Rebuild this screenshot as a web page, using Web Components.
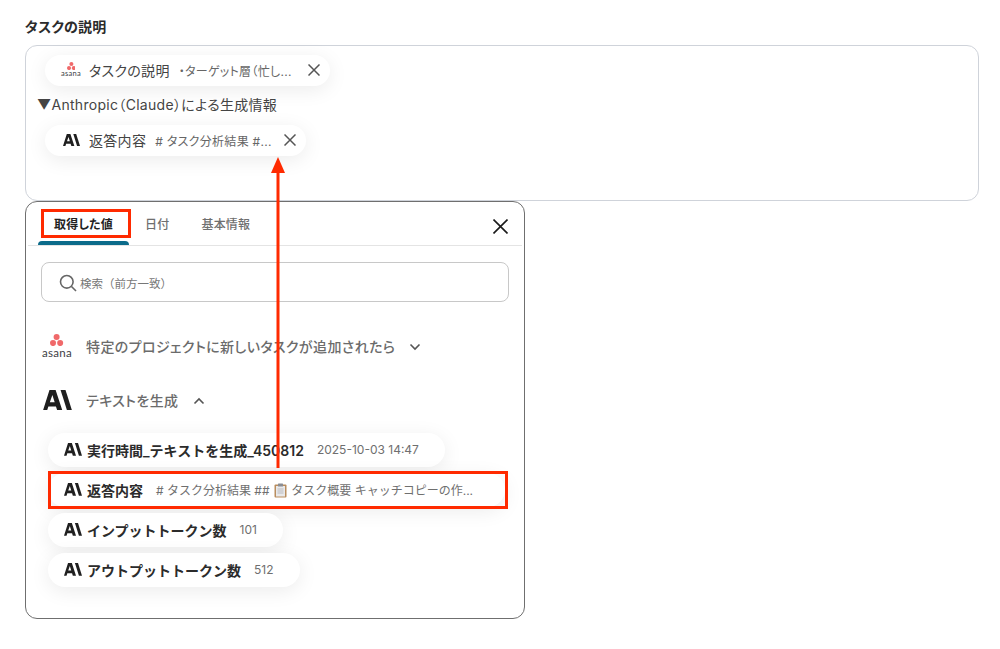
<!DOCTYPE html>
<html lang="ja">
<head>
<meta charset="utf-8">
<title>タスクの説明</title>
<style>
html, body { margin: 0; background: #fff; }
body { font-family: Inter, "Noto Sans CJK JP", sans-serif; font-feature-settings: "palt"; color: #333; width: 1000px; height: 649px; overflow: hidden; position: relative; }
.page { padding: 18px 21px 0 25px; display: flex; flex-direction: column; }
.preview-icon { display: inline-block; vertical-align: -3px; margin: 0 1px; }
</style>
</head>
<body>
<template id="a-logo-tpl">
  <style>
    :host { display: inline-flex; align-items: center; justify-content: center; color: #1f1f1f; }
    svg { width: var(--logo-w, 17px); height: auto; display: block; fill: currentColor; }
  </style>
  <svg viewBox="0 0 34 24"><path d="M7.600 0h7.200l7.900 24h-6l-1.500-4.700H6.300L4.800 24H0zM8 14.400h5.700L11 5.800z"/><path d="M20.600 0h5.800l7.600 24h-5.800z"/></svg>
</template>

<template id="asana-logo-tpl">
  <style>
    :host { display: inline-flex; flex-direction: column; align-items: center; line-height: 1; }
    svg { width: calc(var(--logo-w, 30px) * .44); height: auto; display: block; fill: #f0696a; }
    span { font: 400 var(--word-size, 11.500px)/1 Lato, sans-serif; color: #3d3d45; letter-spacing: .3px; margin-top: var(--word-gap, 1px); }
  </style>
  <svg viewBox="0 0 24 22"><circle cx="12" cy="5.500" r="5.500"/><circle cx="5.500" cy="16.500" r="5.500"/><circle cx="18.500" cy="16.500" r="5.500"/></svg>
  <span>asana</span>
</template>

<template id="token-chip-tpl">
  <style>
    :host { display: inline-flex; align-items: center; align-self: flex-start; box-sizing: border-box; height: 31px; margin-left: 8px; border-radius: 16px; background: #fff; box-shadow: 0 4px 20px rgba(0,0,0,.08); padding: 0 4px 1px 16px; font-size: 14px; letter-spacing: .3px; color: #444; white-space: nowrap; }
    .logo { display: flex; width: 20px; justify-content: center; margin-right: 8px; }
    .preview { font-size: 12px; color: #666; margin-left: 9px; }
    button { all: unset; display: flex; width: 24px; height: 24px; align-items: center; justify-content: center; margin-left: var(--close-gap, 10px); }
    svg { width: 12px; height: 12px; stroke: #555; stroke-width: 1.500; fill: none; }
  </style>
  <span class="logo"><slot name="logo"></slot></span>
  <slot></slot>
  <span class="preview"><slot name="preview"></slot></span>
  <button><svg viewBox="0 0 12 12"><path d="M.5.5l11 11M11.500.5l-11 11"/></svg></button>
</template>

<template id="task-field-tpl">
  <style>
    :host { display: block; }
    label { display: block; font-size: 14px; line-height: 18px; font-weight: 600; letter-spacing: .2px; color: #2b2b2b; margin-bottom: 9px; }
    .box { box-sizing: border-box; height: 156px; border: 1px solid #cfd3da; border-radius: 12px; padding: 9px 18px 0 11px; display: flex; flex-direction: column; }
  </style>
  <label><slot name="label"></slot></label>
  <div class="box"><slot></slot></div>
</template>

<template id="text-line-tpl">
  <style>
    :host { display: block; font-size: 14px; line-height: 20px; letter-spacing: .3px; color: #444; margin: 9px 0 10px; }
  </style>
  <slot></slot>
</template>

<template id="panel-tabs-tpl">
  <style>
    :host { display: flex; height: 43px; margin: 0 2px; padding-left: 10px; border-bottom: 1px solid #e4e4e4; position: relative; }
    button { all: unset; position: absolute; right: 12px; top: 14px; width: 20px; height: 20px; display: flex; align-items: center; justify-content: center; }
    svg { width: 15px; height: 15px; stroke: #1a1a1a; stroke-width: 1.600; fill: none; }
  </style>
  <slot></slot>
  <button><svg viewBox="0 0 15 15"><path d="M.5.5l14 14M14.500.5l-14 14"/></svg></button>
</template>

<template id="panel-tab-tpl">
  <style>
    :host { display: flex; align-items: center; height: 43px; padding: 0 16px 1px; box-sizing: border-box; font-size: 12px; color: #6f6f6f; font-weight: 500; white-space: nowrap; letter-spacing: .2px; }
    :host([active]) { color: #222; font-weight: 700; position: relative; }
    :host([active])::after { content: ""; position: absolute; left: 0; right: 0; bottom: 0; height: 4px; background: #0b6b8a; border-radius: 4px 4px 0 0; }
  </style>
  <slot></slot>
</template>

<template id="search-box-tpl">
  <style>
    :host { display: flex; align-items: center; box-sizing: border-box; height: 40px; margin: 16px 15px 0; border: 1px solid #c8c8c8; border-radius: 8px; padding: 1px 0 0 17px; gap: 3px; font-size: 11.500px; font-feature-settings: normal; color: #777; }
    svg { width: 18px; height: 18px; fill: none; stroke: #666; stroke-width: 1.600; }
  </style>
  <svg viewBox="0 0 18 18"><circle cx="7.800" cy="7.800" r="6.300"/><path d="M12.500 12.500l4.500 4.500"/></svg>
  <slot></slot>
</template>

<template id="source-group-tpl">
  <style>
    :host { display: flex; align-items: center; height: 24px; padding-left: 16px; font-size: 14px; font-weight: 500; letter-spacing: .4px; color: #6b6b6b; white-space: nowrap; }
    .logo { display: flex; width: 30px; justify-content: center; margin-right: 14px; }
    svg { width: 12px; height: 8px; margin: 2px 0 0 14px; stroke: #555; stroke-width: 1.600; fill: none; }
    :host([open]) svg { transform: rotate(180deg); }
  </style>
  <span class="logo"><slot name="logo"></slot></span>
  <slot></slot>
  <svg viewBox="0 0 12 8"><path d="M1.500 1.500L6 6l4.500-4.500"/></svg>
</template>

<template id="output-row-tpl">
  <style>
    :host { display: inline-flex; align-items: center; align-self: flex-start; box-sizing: border-box; height: 34px; border-radius: 17px; background: #fff; box-shadow: 0 4px 20px rgba(0,0,0,.08); padding: 0 26px 1px 16px; font-size: 14px; font-weight: 600; font-feature-settings: normal; color: #2b2b2b; white-space: nowrap; }
    .logo { display: flex; margin-right: 5px; --logo-w: 18px; }
    .value { font-size: 12px; font-weight: 400; color: #6f6f6f; margin-left: 13px; }
  </style>
  <span class="logo"><a-logo></a-logo></span>
  <slot></slot>
  <span class="value"><slot name="value"></slot></span>
</template>

<template id="value-panel-tpl">
  <style>
    :host { display: block; box-sizing: border-box; height: 418px; width: 500px; border: 1px solid #6f6f6f; border-radius: 12px; background: #fff; }
  </style>
  <slot></slot>
</template>

<template id="group-list-tpl">
  <style>
    :host { display: flex; flex-direction: column; }
    :host([rows]) { padding: 21px 0 0 22px; gap: 6px; }
  </style>
  <slot></slot>
</template>

<template id="red-mark-tpl">
  <style>
    :host { position: absolute; box-sizing: border-box; border: 3px solid #ff2a00; display: block; pointer-events: none; }
  </style>
</template>

<template id="red-arrow-tpl">
  <style>
    :host { position: absolute; display: block; left: 268px; top: 156px; pointer-events: none; }
    svg { display: block; width: 20px; height: 314px; }
  </style>
  <svg viewBox="0 0 20 314"><path d="M10 1L17 17H11.500V312H8.500V17H3z" fill="#ff2a00"/></svg>
</template>

<div class="page">
  <task-field>
    <span slot="label">タスクの説明</span>
    <token-chip>
      <asana-logo slot="logo" style="--logo-w:20px;--word-size:7.500px;--word-gap:0"></asana-logo>
      タスクの説明
      <span slot="preview">・ターゲット層（忙し...</span>
    </token-chip>
    <text-line>▼Anthropic（Claude）による生成情報</text-line>
    <token-chip style="--close-gap:6px">
      <a-logo slot="logo"></a-logo>
      返答内容
      <span slot="preview"># タスク分析結果 #...</span>
    </token-chip>
  </task-field>

  <value-panel>
    <panel-tabs>
      <panel-tab active>取得した値</panel-tab>
      <panel-tab>日付</panel-tab>
      <panel-tab>基本情報</panel-tab>
    </panel-tabs>
    <search-box>検索（前方一致）</search-box>
    <group-list style="margin-top:32px;gap:30px">
      <source-group><asana-logo slot="logo"></asana-logo>特定のプロジェクトに新しいタスクが追加されたら</source-group>
      <source-group open><a-logo slot="logo" style="--logo-w:29px"></a-logo>テキストを生成</source-group>
    </group-list>
    <group-list rows>
      <output-row>実行時間_テキストを生成_450812<span slot="value">2025-10-03 14:47</span></output-row>
      <output-row style="padding-right:32px">返答内容<span slot="value"># タスク分析結果 ## <svg class="preview-icon" width="13" height="15" viewBox="0 0 13 15"><rect x=".5" y="1.500" width="12" height="13" rx="1" fill="#b98d5e"/><rect x="2" y="3" width="9" height="10.500" fill="#e9e9ea"/><rect x="4" y=".5" width="5" height="3" rx=".5" fill="#8a8d93"/><path d="M3.500 6h6M3.500 8h6M3.500 10h6" stroke="#a9abb0" stroke-width=".7"/></svg> タスク概要 キャッチコピーの作...</span></output-row>
      <output-row>インプットトークン数<span slot="value">101</span></output-row>
      <output-row>アウトプットトークン数<span slot="value">512</span></output-row>
    </group-list>
  </value-panel>
</div>

<red-arrow></red-arrow>
<red-mark style="left:41px;top:209px;width:90px;height:29px"></red-mark>
<red-mark style="left:48px;top:471px;width:460px;height:38px"></red-mark>

<script>
// each element just clones its template into an open shadow root
class TemplateElement extends HTMLElement {
  constructor() {
    super();
    const tpl = document.getElementById(this.localName + '-tpl');
    this.attachShadow({ mode: 'open' }).appendChild(tpl.content.cloneNode(true));
  }
}

['a-logo', 'asana-logo', 'token-chip', 'task-field', 'text-line', 'panel-tabs', 'panel-tab',
 'search-box', 'source-group', 'output-row', 'value-panel', 'group-list', 'red-mark', 'red-arrow']
  .forEach(name => customElements.define(name, class extends TemplateElement {}));
</script>
</body>
</html>
